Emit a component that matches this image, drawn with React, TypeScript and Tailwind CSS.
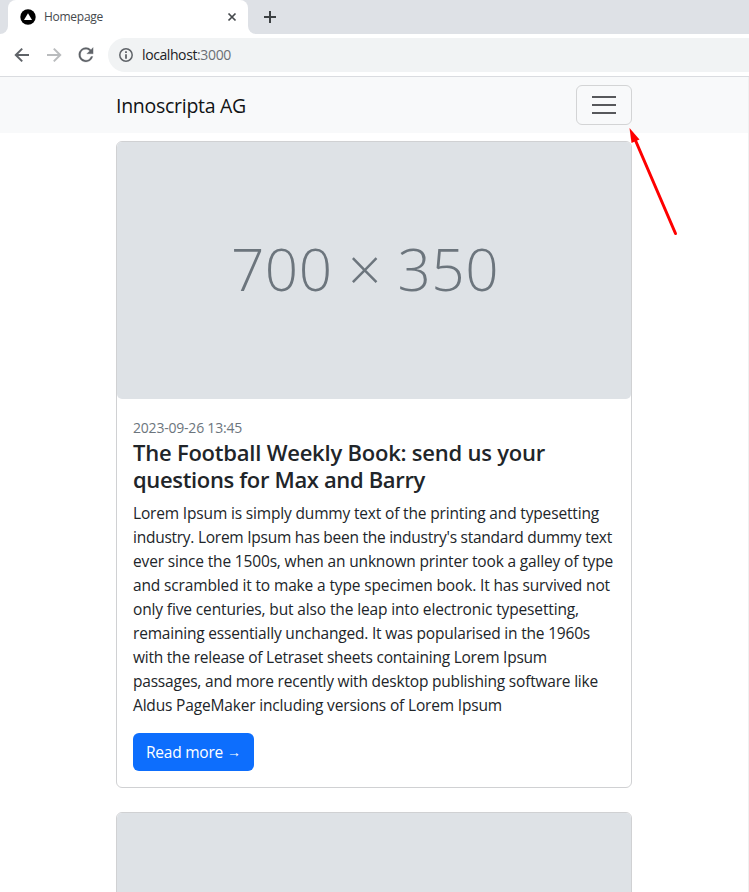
import { useLayoutEffect, useRef, useState } from "react";

/** Single line of text tracked so that it spans exactly `width` pixels. */
function Line({ text, width, className = "" }: { text: string; width: number; className?: string }) {
  const ref = useRef<HTMLSpanElement>(null);
  const [tracking, setTracking] = useState(0);
  useLayoutEffect(() => {
    const el = ref.current;
    if (!el) return;
    const natural = el.getBoundingClientRect().width - tracking * text.length;
    setTracking((width - natural) / text.length);
  }, [text, width]);
  return (
    <span className={`block ${className}`}>
      <span ref={ref} className="inline-block whitespace-nowrap" style={{ letterSpacing: `${tracking}px` }}>
        {text}
      </span>
    </span>
  );
}

const body: [string, number][] = [
  ["Lorem Ipsum is simply dummy text of the printing and typesetting", 466],
  ["industry. Lorem Ipsum has been the industry's standard dummy text", 479],
  ["ever since the 1500s, when an unknown printer took a galley of type", 480],
  ["and scrambled it to make a type specimen book. It has survived not", 477],
  ["only five centuries, but also the leap into electronic typesetting,", 446],
  ["remaining essentially unchanged. It was popularised in the 1960s", 457],
  ["with the release of Letraset sheets containing Lorem Ipsum", 414],
  ["passages, and more recently with desktop publishing software like", 465],
  ["Aldus PageMaker including versions of Lorem Ipsum", 369],
];

function BrowserChrome() {
  return (
    <header>
      <div className="flex h-[34px] bg-[#dee1e6]">
        <div className="w-2 bg-white">
          <div className="h-full rounded-br-lg bg-[#dee1e6]" />
        </div>
        <div className="flex w-60 items-center rounded-t-lg bg-white pr-[11px] pl-3">
          <svg className="size-4" viewBox="0 0 16 16">
            <circle cx="8" cy="8" r="7.7" fill="#000" />
            <path d="M8 4.2 12 11H4Z" fill="#fff" />
          </svg>
          <Line text="Homepage" width={59} className="ml-2 grow text-xs text-[#45494d]" />
          <svg className="size-[10px]" viewBox="0 0 10 10" stroke="#45494d" strokeWidth="1.7">
            <path d="m1.5 1.5 7 7m0-7-7 7" />
          </svg>
        </div>
        <div className="flex grow items-center bg-white">
          <div className="flex h-full grow items-center rounded-bl-lg bg-[#dee1e6] pl-4">
            <svg className="size-3" viewBox="0 0 12 12" stroke="#3c4043" strokeWidth="2">
              <path d="M6 0v12M0 6h12" />
            </svg>
          </div>
        </div>
      </div>
      <div className="flex h-[43px] items-center border-b border-[#dadce0] bg-white pl-[14px]">
        <svg className="size-4" viewBox="0 0 16 16" fill="none" stroke="#5f6368" strokeWidth="2">
          <path d="M15 8H2M8.2 1.6 1.8 8l6.4 6.4" />
        </svg>
        <svg className="ml-4 size-4" viewBox="0 0 16 16" fill="none" stroke="#babcbe" strokeWidth="2">
          <path d="M1 8h13M7.8 1.6 14.2 8l-6.4 6.4" />
        </svg>
        <svg className="ml-4 size-4" viewBox="3.2 3.4 17.8 17.8" fill="#5f6368" stroke="#5f6368" strokeWidth=".3">
          <path d="M17.65 6.35A7.96 7.96 0 0 0 12 4a8 8 0 1 0 7.73 10h-2.08A6 6 0 1 1 12 6c1.66 0 3.14.69 4.22 1.78L13 11h7V4z" />
        </svg>
        <div className="ml-[14px] flex h-[34px] grow items-center rounded-l-full bg-[#f1f3f4] pl-[11px]">
          <svg className="size-[14px]" viewBox="0 0 14 14" fill="none" stroke="#5f6368">
            <circle cx="7" cy="7" r="6.2" strokeWidth="1.5" />
            <path d="M7 3.3v1.8M7 6.2v4.5" strokeWidth="1.8" />
          </svg>
          <div className="ml-[9px] flex text-sm">
            <Line text="localhost" width={55} className="text-[#202124]" />
            <Line text=":3000" width={34} className="text-[#6b6f74]" />
          </div>
        </div>
      </div>
    </header>
  );
}

export default function App() {
  return (
    <div className="relative h-[892px] overflow-hidden bg-white font-['Open_Sans',sans-serif] text-[#212529]">
      <BrowserChrome />
      <div className="h-[815px] border-r border-[#f0f0f0]">
        <nav className="flex h-14 items-center justify-between bg-[#f8f9fa] pr-[116px] pl-[116px]">
          <Line text="Innoscripta AG" width={130} className="pt-[2px] text-[19.5px] text-[#111315]" />
          <button className="flex h-10 w-14 flex-col items-center justify-center gap-[6px] rounded-md border border-[#d3d4d5]">
            <span className="h-[2px] w-6 bg-[#57585b]" />
            <span className="h-[2px] w-6 bg-[#57585b]" />
            <span className="h-[2px] w-6 bg-[#57585b]" />
          </button>
        </nav>
        <main className="mx-[116px] mt-2 w-[516px]">
          <article className="mb-6 h-[647px] rounded-md border border-[#d0d1d3]">
            <div className="flex h-[257px] items-center justify-center rounded-[5px] bg-[#dee2e6] pr-[18px] pb-[4px] text-[58.5px] leading-none font-light text-[#6c757d]">
              <Line text="700 × 350" width={268} />
            </div>
            <div className="px-4 pt-[18px]">
              <Line text="2023-09-26 13:45" width={109} className="text-sm leading-[21px] text-[#6c757d]" />
              <h2 className="mt-px text-[22px] leading-[27px] font-semibold">
                <Line text="The Football Weekly Book: send us your" width={412} />
                <Line text="questions for Max and Barry" width={292} />
              </h2>
              <p className="mt-2 text-[15.5px] leading-6">
                {body.map(([text, width]) => (
                  <Line key={text} text={text} width={width} />
                ))}
              </p>
              <a className="mt-4 flex h-[38px] w-[121px] items-center rounded-md bg-[#0d6efd] pt-[2px] pl-[13px] text-[15.5px] text-white">
                <Line text="Read more" width={77} />
                <span className="ml-1 pb-px font-['Liberation_Sans',sans-serif] text-[14px]">→</span>
              </a>
            </div>
          </article>
          <article className="rounded-md border border-[#d0d1d3]">
            <div className="h-[257px] rounded-[5px] bg-[#dee2e6]" />
          </article>
        </main>
      </div>
      <svg className="absolute top-[120px] left-[620px] h-[120px] w-[64px]" viewBox="620 120 64 120">
        <path d="M634 137 675.5 233.5" stroke="#fe0000" strokeWidth="3" strokeLinecap="round" />
        <path d="M629.5 128 639.5 139.5 631.5 143Z" fill="#fe0000" />
      </svg>
    </div>
  );
}
